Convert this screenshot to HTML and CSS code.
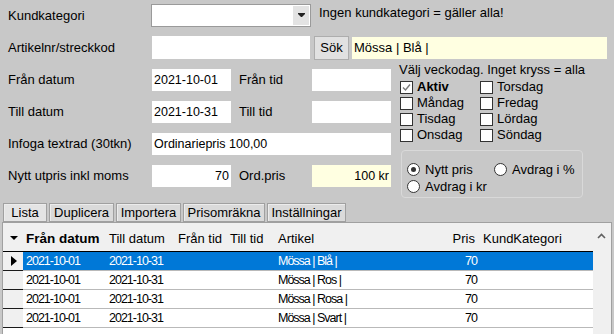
FILE: index.html
```html
<!DOCTYPE html>
<html lang="sv">
<head>
<meta charset="utf-8">
<title>Kampanjpriser</title>
<link rel="stylesheet" href="styles.css">
</head>
<body>
<div class="app">
  <div class="form">
    <div class="row r1">
      <div class="lbl">Kundkategori</div>
      <div class="combo"><div class="combo-btn"><svg width="7" height="4" viewBox="0 0 7 4"><polygon points="0,0 7,0 7,1 4,4 3,4 0,1" fill="#222"/></svg></div></div>
      <div class="note">Ingen kundkategori = gäller alla!</div>
    </div>
    <div class="row r2">
      <div class="lbl">Artikelnr/streckkod</div>
      <div class="field f-art"></div>
      <div class="btn">Sök</div>
      <div class="field yellow f-sel">Mössa | Blå |</div>
    </div>
    <div class="lower">
      <div class="lgrid">
        <div class="lbl">Från datum</div>
        <div class="field">2021-10-01</div>
        <div class="lbl2">Från tid</div>
        <div class="field"></div>
        <div class="lbl">Till datum</div>
        <div class="field">2021-10-31</div>
        <div class="lbl2">Till tid</div>
        <div class="field"></div>
        <div class="lbl">Infoga textrad (30tkn)</div>
        <div class="field span3">Ordinariepris 100,00</div>
        <div class="lbl">Nytt utpris inkl moms</div>
        <div class="field right">70</div>
        <div class="lbl2">Ord.pris</div>
        <div class="field yellow right">100 kr</div>
      </div>
      <div class="rcol">
        <div class="wtitle">Välj veckodag. Inget kryss = alla</div>
        <div class="days">
          <div class="day"><span class="cb"><svg width="11" height="11" viewBox="0 0 11 11"><polyline points="2,5.5 4.5,8 9,2.5" fill="none" stroke="#7a7a7a" stroke-width="1.4"/></svg></span><b>Aktiv</b></div>
          <div class="day"><span class="cb"></span>Torsdag</div>
          <div class="day"><span class="cb"></span>Måndag</div>
          <div class="day"><span class="cb"></span>Fredag</div>
          <div class="day"><span class="cb"></span>Tisdag</div>
          <div class="day"><span class="cb"></span>Lördag</div>
          <div class="day"><span class="cb"></span>Onsdag</div>
          <div class="day"><span class="cb"></span>Söndag</div>
        </div>
        <div class="rgroup">
          <div class="opt"><span class="rb on"></span>Nytt pris</div>
          <div class="opt"><span class="rb"></span>Avdrag i %</div>
          <div class="opt"><span class="rb"></span>Avdrag i kr</div>
        </div>
      </div>
    </div>
  </div>
  <div class="tabs">
    <div class="tab active t-lista">Lista</div>
    <div class="tab t-dup">Duplicera</div>
    <div class="tab t-imp">Importera</div>
    <div class="tab t-pris">Prisomräkna</div>
    <div class="tab t-inst">Inställningar</div>
  </div>
  <div class="grid">
    <div class="gtable">
      <div class="ghead">
        <div class="c rh"><svg class="sort" width="8" height="4" viewBox="0 0 8 4"><polygon points="0,0 8,0 4,4" fill="#000"/></svg></div>
        <div class="c fd bold">Från datum</div>
        <div class="c td">Till datum</div>
        <div class="c ft">Från tid</div>
        <div class="c tt">Till tid</div>
        <div class="c art">Artikel</div>
        <div class="c pris hp">Pris</div>
        <div class="c kk">KundKategori</div>
      </div>
      <div class="grow sel">
        <div class="c rh"><svg width="6" height="10" viewBox="0 0 6 10"><polygon points="0,0 6,5 0,10" fill="#000"/></svg></div>
        <div class="c fd">2021-10-01</div>
        <div class="c td">2021-10-31</div>
        <div class="c ft"></div>
        <div class="c tt"></div>
        <div class="c art">Mössa | Blå |</div>
        <div class="c pris">70</div>
        <div class="c kk"></div>
      </div>
      <div class="grow">
        <div class="c rh"></div>
        <div class="c fd">2021-10-01</div>
        <div class="c td">2021-10-31</div>
        <div class="c ft"></div>
        <div class="c tt"></div>
        <div class="c art">Mössa | Ros |</div>
        <div class="c pris">70</div>
        <div class="c kk"></div>
      </div>
      <div class="grow">
        <div class="c rh"></div>
        <div class="c fd">2021-10-01</div>
        <div class="c td">2021-10-31</div>
        <div class="c ft"></div>
        <div class="c tt"></div>
        <div class="c art">Mössa | Rosa |</div>
        <div class="c pris">70</div>
        <div class="c kk"></div>
      </div>
      <div class="grow">
        <div class="c rh"></div>
        <div class="c fd">2021-10-01</div>
        <div class="c td">2021-10-31</div>
        <div class="c ft"></div>
        <div class="c tt"></div>
        <div class="c art">Mössa | Svart |</div>
        <div class="c pris">70</div>
        <div class="c kk"></div>
      </div>
    </div>
    <div class="vscroll"><svg width="9" height="6" viewBox="0 0 9 6"><polyline points="1,5 4.5,1.5 8,5" fill="none" stroke="#606060" stroke-width="1.6"/></svg></div>
  </div>
</div>
</body>
</html>
```
FILE: styles.css
```css
body {
  margin: 0;
  background: #c8c8c8;
  font: 13px "Liberation Sans", Arial, sans-serif;
  color: #000;
  width: 614px;
  height: 334px;
  overflow: hidden;
}

.form {
  padding: 4px 0 0 8px;
}

.row {
  display: flex;
  align-items: flex-start;
}

.r1 {
  height: 23px;
}

.r1 .lbl {
  width: 143px;
  line-height: 23px;
}

.combo {
  width: 160px;
  height: 23px;
  box-sizing: border-box;
  border: 1px solid #9a9a9a;
  background: #fff;
  display: flex;
  justify-content: flex-end;
  padding: 1px;
}

.combo-btn {
  width: 16px;
  background: #e3e3e3;
  display: flex;
  align-items: center;
  justify-content: center;
}

.combo-btn svg {
  display: block;
  margin-top: -1px;
}

.note {
  margin-left: 8px;
  line-height: 15px;
  margin-top: 1px;
}

.r2 {
  margin-top: 9px;
  height: 24px;
}

.r2 .lbl {
  width: 144px;
  line-height: 23px;
}

.field {
  background: #fff;
  box-sizing: border-box;
  padding: 0 2px;
  line-height: 22px;
  height: 22px;
  font-size: 12.5px;
  white-space: nowrap;
  overflow: hidden;
}

.f-art {
  width: 158px;
  height: 23px;
}

.btn {
  margin-left: 4px;
  width: 35px;
  height: 24px;
  box-sizing: border-box;
  border: 1px solid #adadad;
  background: #e1e1e1;
  text-align: center;
  line-height: 22px;
}

.f-sel {
  margin-left: 3px;
  margin-top: 1px;
  width: 255px;
  font-size: 13px;
}

.yellow {
  background: #ffffe1;
}

.right {
  text-align: right;
}

.lower {
  display: flex;
  align-items: flex-start;
}

.lgrid {
  display: grid;
  grid-template-columns: 144px 79px 81px 79px;
  grid-auto-rows: 22px;
  row-gap: 10px;
  padding-top: 9px;
}

.lgrid .lbl {
  line-height: 22px;
  white-space: nowrap;
}

.lbl2 {
  padding-left: 8px;
  line-height: 22px;
}

.span3 {
  grid-column: span 3;
}

.rcol {
  margin-left: 8px;
  padding-top: 2px;
}

.wtitle {
  line-height: 15px;
  white-space: nowrap;
}

.days {
  margin-top: 2px;
  display: grid;
  grid-template-columns: 80px auto;
  grid-auto-rows: 16px;
}

.day {
  display: flex;
  align-items: flex-start;
  line-height: 15px;
  white-space: nowrap;
}

.cb {
  width: 13px;
  height: 13px;
  box-sizing: border-box;
  border: 1px solid #333;
  background: #fff;
  margin: 2px 4px 0 1px;
  display: flex;
  align-items: center;
  justify-content: center;
}

.cb svg {
  display: block;
}

.rgroup {
  margin-top: 7px;
  margin-left: 2px;
  width: 182px;
  height: 48px;
  box-sizing: border-box;
  border: 1px solid #d9d9d9;
  border-radius: 4px;
  padding: 11px 0 0 5px;
  display: grid;
  grid-template-columns: 87px auto;
  grid-template-rows: 17px 17px;
}

.opt {
  display: flex;
  align-items: flex-start;
  line-height: 15px;
  white-space: nowrap;
}

.rb {
  width: 13px;
  height: 13px;
  border-radius: 50%;
  border: 1px solid #333;
  background: #fff;
  box-sizing: border-box;
  margin: 1px 5px 0 0;
  display: flex;
  align-items: center;
  justify-content: center;
}

.rb.on::after {
  content: "";
  width: 5px;
  height: 5px;
  border-radius: 50%;
  background: #333;
}

.tabs {
  display: flex;
  gap: 2px;
  margin: 5px 0 0 3px;
  height: 19px;
}

.tab {
  box-sizing: border-box;
  height: 19px;
  border: 1px solid #a0a0a0;
  background: #dadada;
  box-shadow: inset 1px 1px 0 #ececec;
  text-align: center;
  line-height: 17px;
  white-space: nowrap;
}

.tab.active {
  background: #e4e4e4;
}

.t-lista { width: 44px; }
.t-dup { width: 65px; }
.t-imp { width: 65px; }
.t-pris { width: 82px; }
.t-inst { width: 79px; }

.grid {
  margin-left: 2px;
  width: 610px;
  height: 112px;
  box-sizing: border-box;
  border: 1px solid #a0a0a0;
  border-bottom: none;
  display: flex;
  background: #fff;
}

.gtable {
  width: 590px;
}

.vscroll {
  width: 18px;
  background: #f0f0f0;
  padding: 10px 0 0 4px;
  box-sizing: border-box;
}

.vscroll svg {
  display: block;
}

.ghead {
  display: flex;
  height: 29px;
  box-sizing: border-box;
  background: #f0f0f0;
  border-bottom: 1px solid #000;
  padding-top: 3px;
  line-height: 25px;
}

.c {
  padding-left: 3px;
  box-sizing: border-box;
  white-space: nowrap;
  overflow: hidden;
}

.rh { width: 20px; }
.fd { width: 83px; }
.td { width: 69px; }
.ft { width: 52px; }
.tt { width: 48px; }
.art { width: 155px; }
.pris { width: 50px; text-align: right; padding-right: 3px; }
.kk { width: 113px; }

.ghead .hp {
  padding-right: 5px;
}

.ghead .rh {
  padding-left: 7px;
  display: flex;
  align-items: center;
}

.sort {
  display: block;
  margin-top: -1px;
}

.bold {
  font-weight: bold;
  font-size: 13.5px;
}

.grow {
  display: flex;
  height: 19px;
  font-size: 12.5px;
  letter-spacing: -1px;
  line-height: 18px;
}

.grow .c {
  border-bottom: 1px solid #b9b9b9;
}

.grow .rh {
  background: #f0f0f0;
  border-bottom-color: #1a1a1a;
  padding-left: 8px;
  display: flex;
  align-items: center;
}

.grow .rh svg {
  display: block;
}

.grow.sel .c:not(.rh) {
  background: #0078d7;
  color: #fff;
}
```
